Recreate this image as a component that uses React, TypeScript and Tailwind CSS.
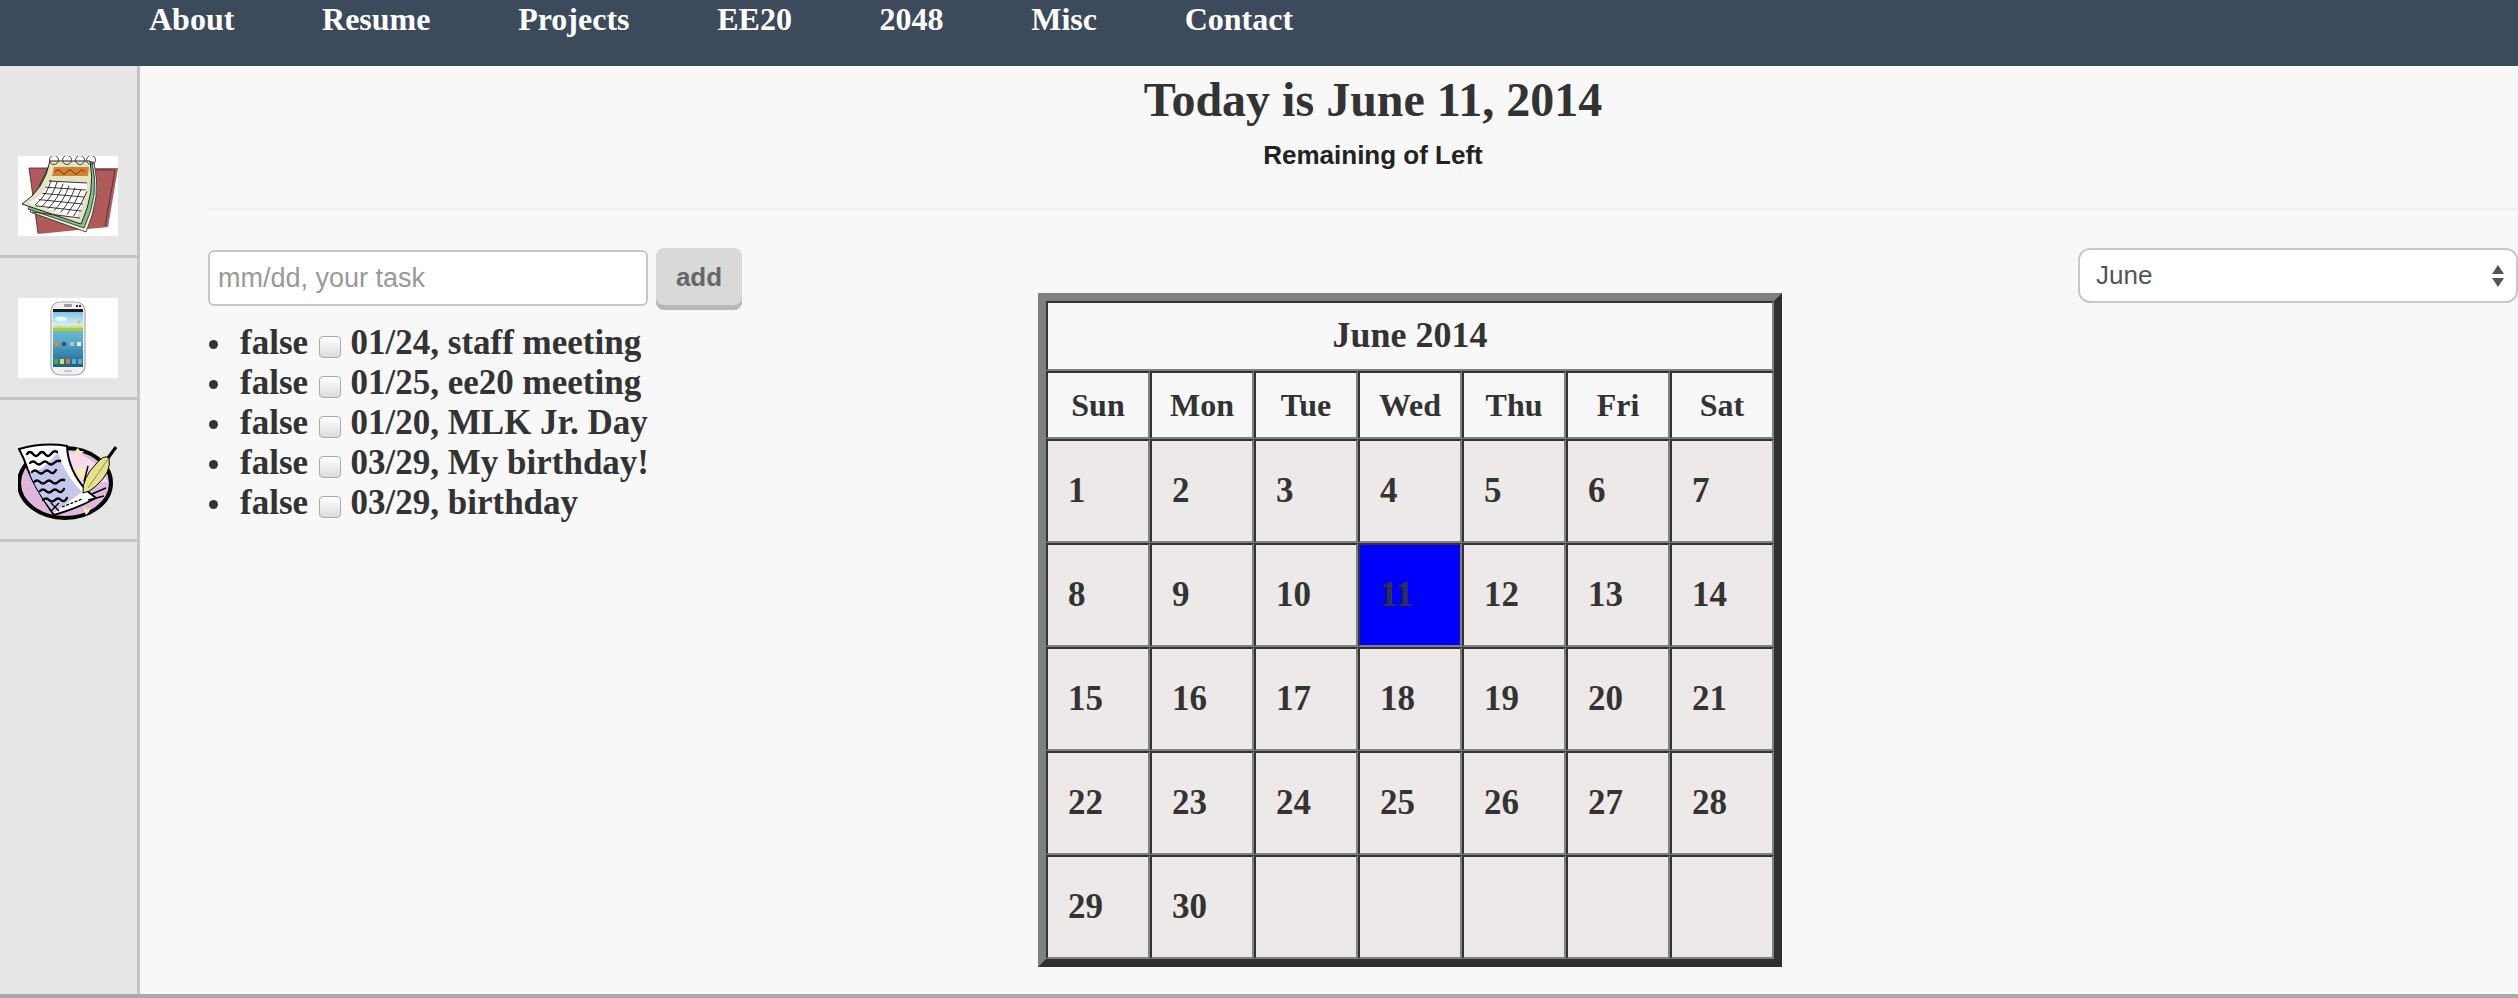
const navItems = ['About', 'Resume', 'Projects', 'EE20', '2048', 'Misc', 'Contact']
const days = ['Sun', 'Mon', 'Tue', 'Wed', 'Thu', 'Fri', 'Sat']
const tasks = ['01/24, staff meeting', '01/25, ee20 meeting', '01/20, MLK Jr. Day', '03/29, My birthday!', '03/29, birthday']
const weeks = [
  [1, 2, 3, 4, 5, 6, 7],
  [8, 9, 10, 11, 12, 13, 14],
  [15, 16, 17, 18, 19, 20, 21],
  [22, 23, 24, 25, 26, 27, 28],
  [29, 30, 0, 0, 0, 0, 0],
]

function CalendarIcon() {
  const cols = [0, 1, 2, 3, 4, 5, 6]
  const rows = [0, 1, 2, 3, 4, 5]
  return (
    <svg width="100" height="80" viewBox="0 0 100 80" className="block bg-white">
      <path d="M11 12 L100 12 L90 71 L20 78 Z" fill="#b05a5c" />
      <path d="M11 12 L34 12 M11 12 L20 77 M72 14 L97 14 L87 70" fill="none" stroke="#3a2a2a" strokeWidth="0.8" />
      <path d="M34 6 L76 6 Q84 40 68 76 L12 56 Z" fill="#efeee0" stroke="#222" strokeWidth="0.8" />
      <path d="M33 6 L74 6 Q82 38 66 72 L10 53 Z" fill="#7dc688" stroke="#222" strokeWidth="0.8" />
      <path d="M32 5 L72 5 Q78 36 63 68 L4 48 Q26 34 32 5 Z" fill="#e5e2c2" stroke="#222" strokeWidth="1" />
      <path d="M36 11 L71 11 L70 20 L34 20 Z" fill="#d9802a" />
      <path d="M37 16 Q40 12 43 16 T49 16 T55 16 T61 16 T67 16" fill="none" stroke="#333" strokeWidth="0.9" />
      <path d="M31 26 Q27 38 11 47 L58 63 Q67 46 69 27 Z" fill="#fff" />
      {cols.map(i => (
        <path key={i} d={`M${33 + i * 6} 24 Q${30 + i * 5.5} 38 ${17 + i * 6.4} 49`} fill="none" stroke="#222" strokeWidth="0.9" transform={`translate(0 ${i * 1.9})`} />
      ))}
      {rows.map(i => (
        <path key={i} d={`M${31 - i * 3.4} ${25 + i * 6.2} L${69 - i * 1.4} ${27 + i * 7}`} fill="none" stroke="#222" strokeWidth="0.9" />
      ))}
      {[36, 49, 62, 73].map(x => (
        <circle key={x} cx={x} cy="4" r="4.5" fill="none" stroke="#333" strokeWidth="0.9" />
      ))}
    </svg>
  )
}

function PhoneIcon() {
  return (
    <svg width="100" height="80" viewBox="0 0 100 80" className="block bg-white">
      <defs>
        <linearGradient id="sky" x1="0" y1="0" x2="0" y2="1">
          <stop offset="0" stopColor="#7cc4e8" />
          <stop offset="0.8" stopColor="#d4eef8" />
          <stop offset="1" stopColor="#c4dc50" />
        </linearGradient>
        <linearGradient id="sea" x1="0" y1="0" x2="0" y2="1">
          <stop offset="0" stopColor="#8ccbe0" />
          <stop offset="0.55" stopColor="#5aaccc" />
          <stop offset="1" stopColor="#12618f" />
        </linearGradient>
      </defs>
      <rect x="33" y="4" width="34" height="73" rx="9" fill="#eff0f2" stroke="#a8a8ac" strokeWidth="1.2" />
      <rect x="35" y="11" width="30" height="58" fill="url(#sea)" />
      <rect x="35" y="11" width="30" height="3" fill="#1a1a1a" />
      <rect x="35" y="14" width="30" height="16" fill="url(#sky)" />
      <ellipse cx="43" cy="21" rx="6" ry="2.5" fill="#eef8fc" />
      <circle cx="61" cy="24" r="1.5" fill="#f0b93a" />
      <rect x="35" y="30" width="30" height="3" fill="#a9cc3a" />
      <rect x="37" y="44" width="4" height="4" fill="#e88a2c" />
      <rect x="44" y="44" width="4" height="4" fill="#3b4a8a" />
      <rect x="52" y="44" width="4" height="4" fill="#b8c4da" />
      <rect x="59" y="44" width="4" height="4" fill="#e4eef4" />
      <rect x="36" y="61" width="4" height="5" fill="#4fa84a" />
      <rect x="42" y="61" width="4" height="5" fill="#f4d35a" />
      <rect x="48" y="61" width="4" height="5" fill="#e2762a" />
      <rect x="54" y="61" width="4" height="5" fill="#5aaed8" />
      <rect x="60" y="61" width="4" height="5" fill="#7d9fb5" />
      <rect x="46" y="6" width="8" height="3" rx="1" fill="#9a9a9e" />
      <rect x="58" y="7" width="2" height="2" fill="#333" />
      <rect x="61" y="7" width="2" height="2" fill="#333" />
      <rect x="46" y="72" width="8" height="2" rx="1" fill="#c4c4c8" />
    </svg>
  )
}

function NoteIcon() {
  const lines = [
    'M9 14 Q12 10 15 14 T21 14 T27 14 T33 14 T39 12',
    'M12 23 Q15 20 18 23 T24 23 T30 23 T36 23 T42 21',
    'M14 32 Q17 29 20 32 T26 32 T32 32 T38 30',
    'M16 42 Q19 39 22 42 T28 42 T34 42 T40 42 T46 40',
    'M22 51 Q25 48 28 51 T34 51 T40 51 T46 49',
    'M25 60 Q28 57 31 60 T37 60 T43 60 T49 58',
  ]
  return (
    <svg width="100" height="80" viewBox="0 0 100 80" className="block">
      <ellipse cx="47" cy="43" rx="46" ry="35" fill="#dfb6dc" stroke="#000" strokeWidth="4" />
      <path d="M50 11 Q76 14 90 42 L52 44 Z" fill="#f6dcea" />
      <path d="M58 26 L63 30 L69 26 L66 33 L70 38 L63 37 L58 41 L59 34 L55 30 L60 30 Z" fill="#f7efb0" />
      <path d="M60 8 L62 11 L66 11 L63 14 L60 13 L56 12 Z" fill="#f7efb0" />
      <path d="M66 66 L69 70 L73 67 L71 72 L68 75 L66 71 Z" fill="#f7efb0" />
      <path d="M1 9 Q26 2 49 6 Q50 30 68 50 L78 58 Q60 68 36 75 Q18 50 10 30 Q6 18 1 9 Z" fill="#fff" stroke="#000" strokeWidth="2" />
      <path d="M12 34 Q26 30 40 12 Q46 34 64 52 L36 73 Q20 54 12 34 Z" fill="#c6c6ec" />
      {lines.map(d => (
        <path key={d} d={d} fill="none" stroke="#000" strokeWidth="2.4" strokeLinecap="round" />
      ))}
      <path d="M33 71 L41 63 M33 63 L41 71" fill="none" stroke="#000" strokeWidth="1.4" />
      <path d="M44 67 L64 59" fill="none" stroke="#000" strokeWidth="1.3" strokeDasharray="3 1.5" />
      <path d="M65 53 Q64 38 78 24 Q86 14 91 18 Q94 32 78 46 Q72 52 65 53 Z" fill="#e3e38f" stroke="#000" strokeWidth="1" />
      <path d="M70 48 Q80 34 90 19" fill="none" stroke="#8d8d3a" strokeWidth="1" />
      <path d="M90 18 L98 7" fill="none" stroke="#000" strokeWidth="3" />
      <path d="M70 26 L66 42 M74 54 L88 48 M70 60 L86 56" fill="none" stroke="#000" strokeWidth="1.5" />
    </svg>
  )
}

function DayCell({ day }: { day: number }) {
  const today = day === 11
  return (
    <td className={`h-[104px] border-2 border-t-[#333] border-l-[#333] border-r-[#808080] border-b-[#808080] pl-5 align-middle text-[35px] ${today ? 'bg-[#0000ff]' : 'bg-[#ede9e8]'}`}>
      {day > 0 ? day : ''}
    </td>
  )
}

export default function App() {
  return (
    <div className="flex h-[998px] w-[2518px] flex-col overflow-hidden bg-[#f8f8f8] font-['Liberation_Serif',serif] text-[32px] font-bold text-[#333]">
      <nav className="flex h-[66px] shrink-0 gap-[87.7px] bg-[#3d4a5c] pl-[149px] leading-[38px] text-white">
        {navItems.map(item => (
          <a key={item}>{item}</a>
        ))}
      </nav>

      <div className="flex flex-1 border-b-4 border-[#a9a9a9]">
        <aside className="w-[140px] shrink-0 border-r-[3px] border-[#c4c4c4] bg-[#e6e6e6] pt-[50px]">
          <div className="h-[142px] border-b-[3px] border-[#c4c4c4] pt-10 pl-[18px]"><CalendarIcon /></div>
          <div className="h-[142px] border-b-[3px] border-[#c4c4c4] pt-10 pl-[18px]"><PhoneIcon /></div>
          <div className="h-[142px] border-b-[3px] border-[#c4c4c4] pt-10 pl-[18px]"><NoteIcon /></div>
        </aside>

        <main className="min-w-0 flex-1 pl-[68px]">
          <header className="flex h-[144px] flex-col items-center border-b-2 border-[#eeeeee] pl-[20px]">
            <h1 className="mt-[7px] text-[48px] leading-[54px]">Today is June 11, 2014</h1>
            <p className="mt-[12px] font-['Liberation_Sans',sans-serif] text-[26px] leading-[32px] text-[#222]">Remaining of Left</p>
          </header>

          <div className="flex items-start pt-[38px]">
            <section className="w-[830px] shrink-0">
              <div className="flex items-start gap-2">
                <input
                  placeholder="mm/dd, your task"
                  className="mt-[2px] h-[56px] w-[440px] rounded-[6px] border-2 border-[#c8c8c8] bg-white pl-2 font-['Liberation_Sans',sans-serif] text-[27px] font-normal placeholder:text-[#999] focus:outline-none"
                />
                <button className="h-[62px] w-[86px] rounded-[8px] bg-[#d9d9d9] pb-1 font-['Liberation_Sans',sans-serif] text-[26px] font-bold text-[#666] shadow-[inset_0_-5px_0_#b8b8b8]">add</button>
              </div>
              <ul className="mt-[13px] list-none pl-8 text-[35px] leading-[40px]">
                {tasks.map(task => (
                  <li key={task} className="relative whitespace-nowrap before:absolute before:left-[-31px] before:top-[17px] before:h-[9px] before:w-[9px] before:rounded-full before:bg-[#333]">
                    false <input type="checkbox" className="ml-[2px] mr-[1px] h-[22px] w-[22px] translate-y-[4px] appearance-none rounded-[4px] border border-[#aaa] bg-gradient-to-b from-white to-[#dcdcdc]" /> {task}
                  </li>
                ))}
              </ul>
            </section>

            <table className="mt-[45px] w-[744px] shrink-0 table-fixed border-separate border-spacing-0 border-8 border-t-[#808080] border-l-[#808080] border-r-[#2f2f2f] border-b-[#2f2f2f]">
              <thead>
                <tr>
                  <th colSpan={7} className="h-[70px] border-2 border-t-[#333] border-l-[#333] border-r-[#808080] border-b-[#808080] pb-[2px] text-[36px]">June 2014</th>
                </tr>
                <tr>
                  {days.map(day => (
                    <th key={day} className="h-[68px] border-2 border-t-[#333] border-l-[#333] border-r-[#808080] border-b-[#808080]">{day}</th>
                  ))}
                </tr>
              </thead>
              <tbody>
                {weeks.map((week, i) => (
                  <tr key={i}>
                    {week.map((day, j) => <DayCell key={j} day={day} />)}
                  </tr>
                ))}
              </tbody>
            </table>

            <div className="relative ml-auto w-[440px] shrink-0">
              <select className="h-[55px] w-full appearance-none rounded-[12px] border-2 border-[#c8c8c8] bg-white pl-4 font-['Liberation_Sans',sans-serif] text-[26px] font-normal text-[#555]" defaultValue="June">
                <option>June</option>
              </select>
              <svg width="12" height="22" viewBox="0 0 12 22" className="pointer-events-none absolute right-[14px] top-[17px] text-[#555]" fill="currentColor">
                <path d="M6 0 L12 9 L0 9 Z M0 13 L12 13 L6 22 Z" />
              </svg>
            </div>
          </div>
        </main>
      </div>
    </div>
  )
}
